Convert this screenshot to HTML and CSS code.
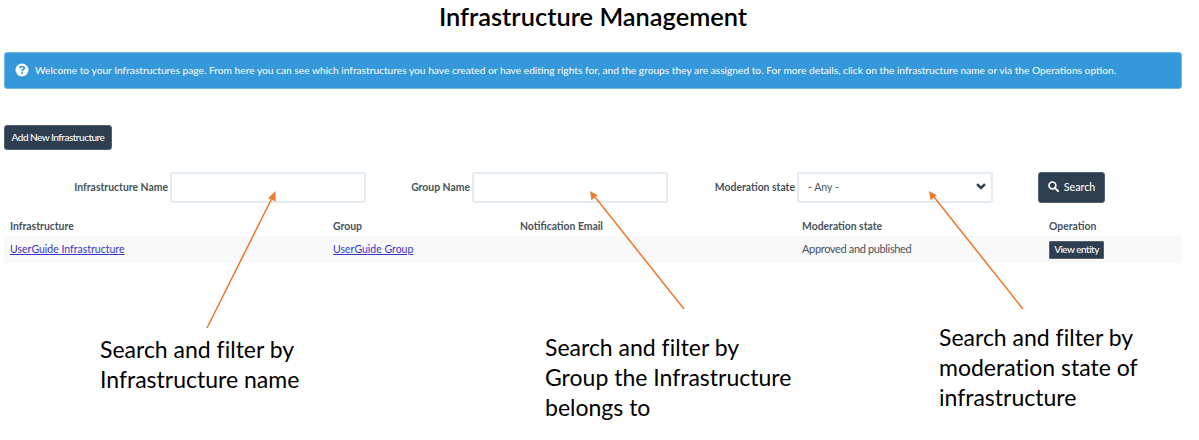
FILE: index.html
```html
<!DOCTYPE html>
<html lang="en">
<head>
<meta charset="utf-8">
<title>Infrastructure Management</title>
<link rel="stylesheet" href="styles.css">
</head>
<body>
<main class="page">
  <h1 class="title">Infrastructure Management</h1>

  <div class="alert">
    <svg class="alert-icon" viewBox="0 0 14 14"><circle cx="7" cy="7" r="6.5" fill="#fff"/><path d="M4.8 5.3C5.2 3.8 6 3.5 7 3.5c1.300 0 2.200.7 2.200 1.700C9.200 6.600 7.100 6.500 7.100 8.200" fill="none" stroke="#3498db" stroke-width="1.700"/><rect x="6.200" y="9.200" width="1.800" height="1.700" fill="#3498db"/></svg>
    <span class="alert-text">Welcome to your Infrastructures page. From here you can see which infrastructures you have created or have editing rights for, and the groups they are assigned to. For more details, click on the infrastructure name or via the Operations option.</span>
  </div>

  <button class="btn btn-add"><span>Add New Infrastructure</span></button>

  <form class="filters">
    <label class="label" for="name">Infrastructure Name</label>
    <input class="field" id="name" type="text">
    <label class="label" for="group">Group Name</label>
    <input class="field" id="group" type="text">
    <label class="label">Moderation state</label>
    <div class="field select"><span>- Any -</span><svg class="chevron" viewBox="0 0 10 7"><path d="M1 1.200L5 5l4-3.800" fill="none" stroke="#2c3e50" stroke-width="2.500"/></svg></div>
    <button class="btn btn-search" type="button"><svg class="search-icon" viewBox="0 0 11 11"><circle cx="4.400" cy="4.400" r="3.400" fill="none" stroke="#fff" stroke-width="1.700"/><path d="M6.900 6.900L10 10" stroke="#fff" stroke-width="2" stroke-linecap="round"/></svg><span>Search</span></button>
  </form>

  <div class="table">
    <div class="row head"><span>Infrastructure</span><span>Group</span><span>Notification Email</span><span>Moderation state</span><span>Operation</span></div>
    <div class="row body"><span><a class="link" href="#">UserGuide Infrastructure</a></span><span><a class="link" href="#">UserGuide Group</a></span><span></span><span class="status">Approved and published</span><span><button class="btn btn-view"><span>View entity</span></button></span></div>
  </div>

  <div class="notes">
    <p class="note note-name">Search and filter by<br>Infrastructure name</p>
    <p class="note note-group">Search and filter by<br>Group the Infrastructure<br>belongs to</p>
    <p class="note note-state">Search and filter by<br>moderation state of<br>infrastructure</p>
  </div>

  <svg class="arrows" viewBox="0 0 1199 440">
    <g stroke="#ed7d31" stroke-width="1.600"><path d="M207 328L272 198M684 309L595 197M1023 309L934 197"/></g>
    <g fill="#ed7d31"><path d="M275.500 191l-7.300 7.200 7.500 3.300z"/><path d="M590 191l1.500 9.200 6.200-5z"/><path d="M929 191l1.500 9.200 6.200-5z"/></g>
  </svg>
</main>
</body>
</html>
```
FILE: styles.css
```css
* { box-sizing: border-box; }
body { margin: 0; background: #fff; font-family: Lato, "Open Sans", sans-serif; font-size: 10.5px; color: #46525c; }
.page { position: relative; width: 1199px; height: 440px; padding: 0 17px 0 4px; overflow: hidden; }
.title { height: 52px; margin: 0; padding-top: 1px; text-align: center; font-size: 25.400px; line-height: 31px; font-weight: 600; color: #000; white-space: nowrap; }
.alert { display: flex; align-items: center; height: 37px; padding: 0 0 1px 10px; gap: 6px; background: #3498db; border: 1px solid #72b8e6; border-radius: 3px; color: #fff; white-space: nowrap; }
.alert-icon { width: 14px; height: 14px; flex: none; }
.alert-text { font-size: 10.210px; }
.btn { display: flex; align-items: center; justify-content: center; padding: 0 0 2px; border: 1px solid #53616f; border-radius: 3px; background: #2c3e50; color: #fff; font: 500 10px Lato, sans-serif; white-space: nowrap; }
.btn-add { width: 108px; height: 25px; margin-top: 36px; letter-spacing: -0.500px; }
.filters { display: grid; grid-template-columns: 166px 196px 106px 196px 129px 196px 67px; height: 31px; margin-top: 22px; }
.label { display: flex; align-items: center; justify-content: flex-end; padding: 0 2px 2px 0; font-weight: 700; font-size: 10.400px; white-space: nowrap; }
.field { width: 196px; height: 31px; border: 2px solid #e3eaf0; border-radius: 3px; background: #fff; outline: 0; }
.select { display: flex; align-items: center; justify-content: space-between; padding: 0 5px 1px 9px; font-size: 10.500px; }
.chevron { width: 10px; height: 7px; margin-top: -1px; }
.btn-search { width: 67px; height: 31px; margin-left: 45px; gap: 5px; font-size: 10.700px; }
.search-icon { width: 11px; height: 11px; }
.table { margin-top: 13px; white-space: nowrap; }
.row { display: grid; grid-template-columns: 323px 187px 282px 247px 132px; align-items: center; padding-left: 6px; }
.head { height: 20px; padding-bottom: 1px; font-weight: 700; font-size: 10.400px; }
.body { height: 27px; background: #f9f9f9; }
.body > span { padding-bottom: 2px; }
.body > span:last-child { padding-bottom: 0; }
.link { color: #3636cc; text-decoration: underline; }
.status { font-size: 11px; letter-spacing: -0.350px; }
.btn-view { width: 55px; height: 18px; border-radius: 1px; letter-spacing: -0.520px; margin-top: 1px; }
.notes { display: grid; grid-template-columns: 445px 394px 1fr; padding-left: 96px; }
.note { margin: 0; font-size: 23px; line-height: 30px; color: #000; white-space: nowrap; font-variant-ligatures: none; }
.note-name { padding-top: 71px; }
.note-group { padding-top: 69px; }
.note-state { padding-top: 59px; }
.arrows { position: absolute; left: 0; top: 0; width: 1199px; height: 440px; pointer-events: none; }
```
